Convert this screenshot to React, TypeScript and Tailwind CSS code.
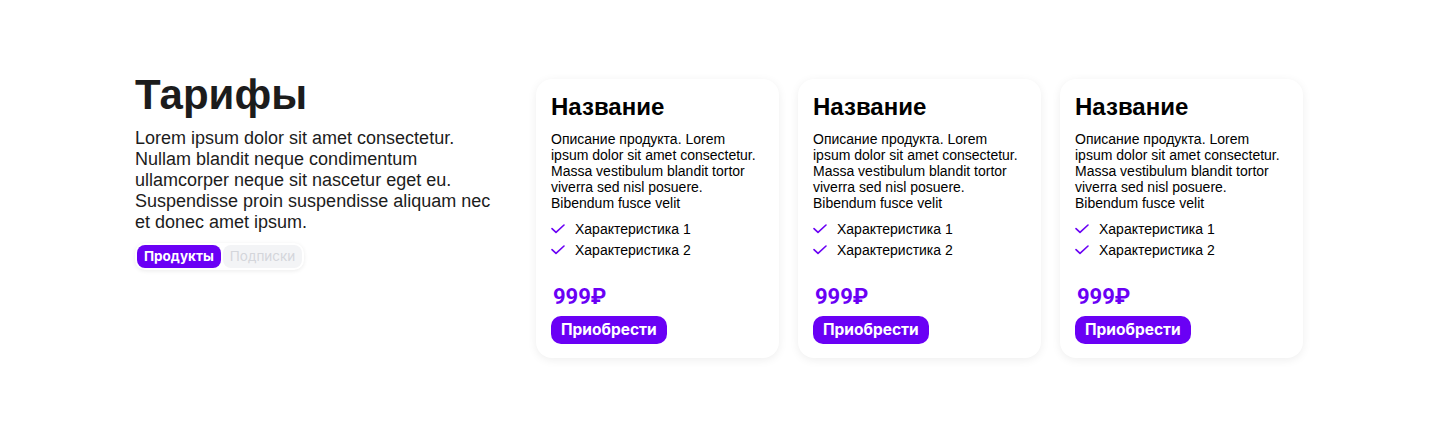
import React from "react";

const plans = [0, 1, 2].map((i) => ({
    id: i,
    title: "Название",
    text: "Описание продукта. Lorem ipsum dolor sit amet consectetur. Massa vestibulum blandit tortor viverra sed nisl posuere. Bibendum fusce velit",
    features: ["Характеристика 1", "Характеристика 2"],
    price: "999₽",
}));

const arial = "font-['Liberation_Sans',Arial,sans-serif]";
const roboto = "font-['Roboto','Liberation_Sans',sans-serif]";
const inter = "font-['Inter','Liberation_Sans',sans-serif]";

function Tick() {
    return (
        <svg width="14" height="10" viewBox="0 0 14 10" fill="none" className="shrink-0">
            <path d="M1 4.6 L5 8.4 L13 1" stroke="#6a00f5" strokeWidth="1.6" strokeLinecap="round" strokeLinejoin="round" />
        </svg>
    );
}

export default function App() {
    return (
        <div className={`min-h-screen bg-white ${arial}`}>
            <div className="pl-[135px] pt-[79px] flex items-start">
                {/* left */}
                <div className="w-[401px] pr-[30px] -mt-[8px]">
                    <h1 className="text-[42px] leading-[48px] font-bold text-[#1c1c1c]">Тарифы</h1>
                    <p className="mt-[9px] text-[18px] leading-[21px] text-[#1c1c1c]">
                        Lorem ipsum dolor sit amet consectetur. Nullam blandit neque condimentum
                        ullamcorper neque sit nascetur eget eu. Suspendisse proin suspendisse aliquam
                        nec et donec amet ipsum.
                    </p>
                    <div className={`mt-[10px] inline-flex gap-[2px] p-[2px] rounded-[10px] bg-white shadow-[0_1px_4px_rgba(0,0,0,0.08)] ${inter}`}>
                        <button className="h-[23px] px-[7px] rounded-[8px] bg-[#6a00f5] text-white text-[13.5px] font-bold">
                            Продукты
                        </button>
                        <button className="h-[23px] px-[7px] rounded-[8px] bg-[#f3f4f6] text-[#d4d6db] text-[13.5px] font-normal">
                            Подписки
                        </button>
                    </div>
                </div>

                {/* cards */}
                <div className="flex gap-[19px]">
                    {plans.map((p) => (
                        <div
                            key={p.id}
                            className="w-[243px] h-[279px] rounded-[16px] bg-white shadow-[0_2px_10px_rgba(0,0,0,0.07)] px-[15px] pt-[14px] pb-[14px] flex flex-col"
                        >
                            <h2 className="text-[24px] leading-[28px] font-bold text-black">{p.title}</h2>
                            <p className="mt-[10px] text-[14px] leading-[16px] text-black">{p.text}</p>
                            <ul className="mt-[10px] flex flex-col gap-[5px]">
                                {p.features.map((f) => (
                                    <li key={f} className="flex items-center gap-[10px] text-[14px] leading-[16px] text-black">
                                        <Tick />
                                        {f}
                                    </li>
                                ))}
                            </ul>
                            <div className="mt-auto">
                                <div className={`pl-[2px] text-[22px] leading-[26px] font-bold text-[#6a00f5] ${roboto}`}>{p.price}</div>
                                <button className={`mt-[6px] h-[28px] px-[10px] rounded-[10px] bg-[#6a00f5] text-white text-[15.5px] font-bold ${inter}`}>
                                    Приобрести
                                </button>
                            </div>
                        </div>
                    ))}
                </div>
            </div>
        </div>
    );
}
